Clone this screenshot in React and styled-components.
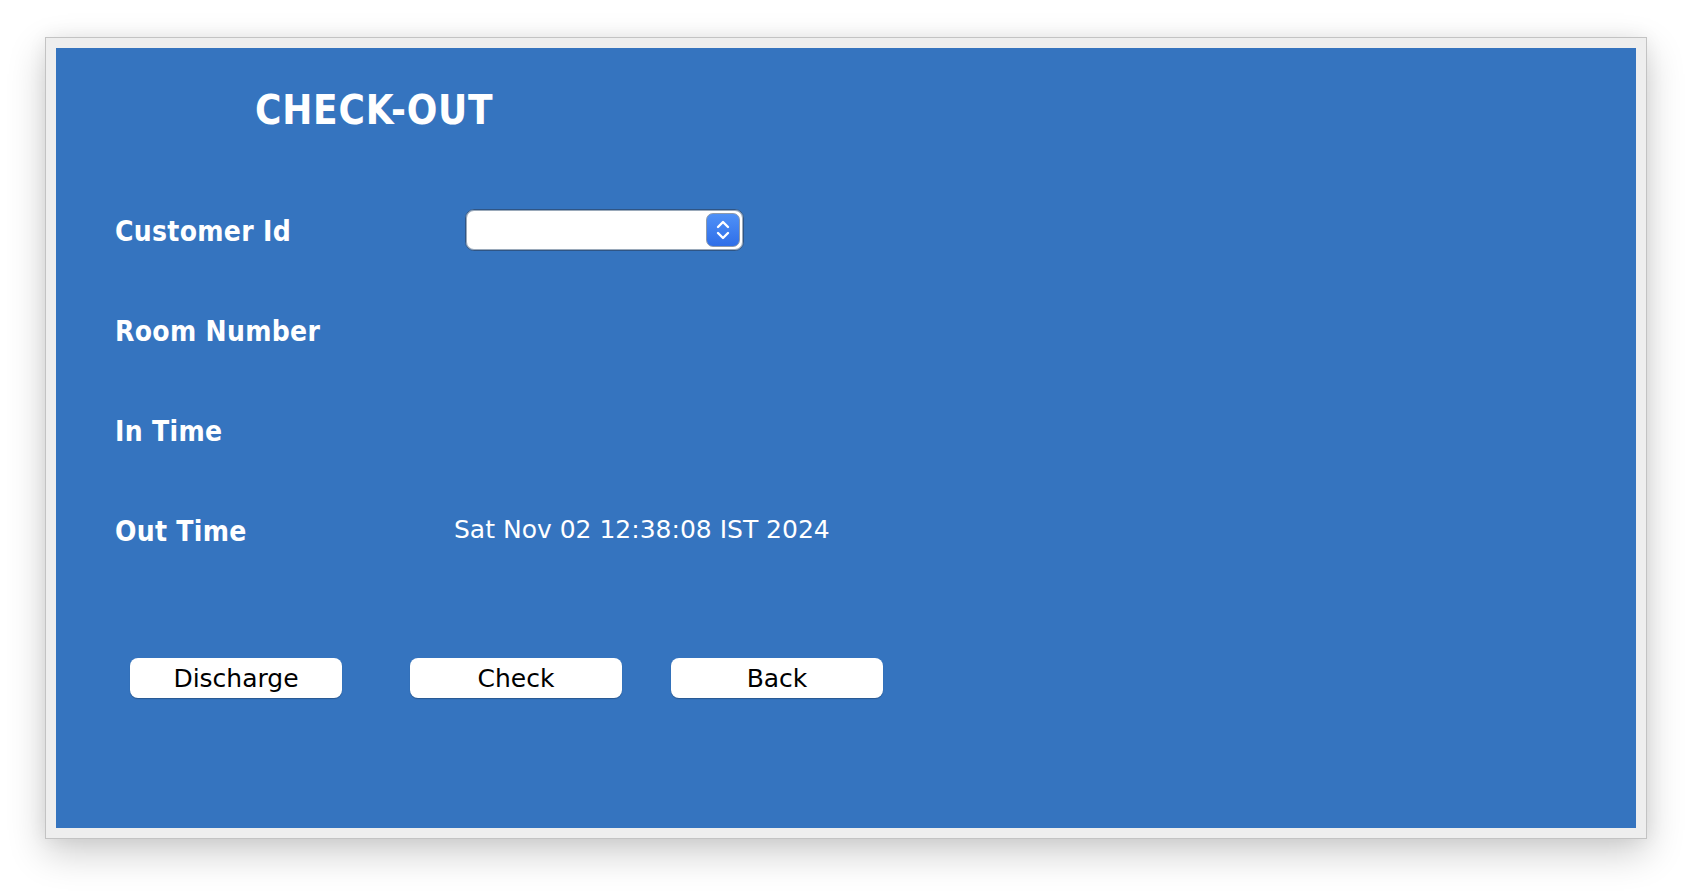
import React from "react";
import styled, { createGlobalStyle } from "styled-components";

const GlobalStyle = createGlobalStyle`
  html, body {
    margin: 0;
    padding: 0;
    background: #ffffff;
  }
  body {
    font-family: "DejaVu Sans", "Liberation Sans", sans-serif;
  }
`;

const Page = styled.div`
  padding: 37px 0 0 45px;
  width: 1692px;
  height: 892px;
  box-sizing: border-box;
`;

const Window = styled.div`
  width: 1602px;
  height: 802px;
  box-sizing: border-box;
  background: #eeeeee;
  border: 1px solid #c3c3c3;
  padding: 10px;
  box-shadow: 0 14px 36px rgba(0, 0, 0, 0.2), 0 0 18px rgba(0, 0, 0, 0.06);
`;

const Panel = styled.div`
  width: 1580px;
  height: 780px;
  background: #3574bf;
  display: flex;
  flex-direction: column;
  padding-top: 42px;
  box-sizing: border-box;
`;

const Title = styled.h1`
  margin: 0 0 0 199px;
  font-family: "DejaVu Sans Condensed", "DejaVu Sans", sans-serif;
  font-weight: bold;
  font-size: 40px;
  line-height: 40px;
  letter-spacing: 0.8px;
  color: #ffffff;
`;

const Form = styled.div`
  margin-top: 49px;
  display: grid;
  grid-template-columns: 339px 1fr;
  grid-auto-rows: 100px;
  align-items: center;
  padding-left: 59px;
`;

const Label = styled.div`
  font-family: "DejaVu Sans Condensed", "DejaVu Sans", sans-serif;
  font-weight: bold;
  font-size: 28px;
  line-height: 28px;
  letter-spacing: 0.3px;
  padding-top: 5px;
  color: #ffffff;
`;

const Value = styled.div`
  font-family: "DejaVu Sans", sans-serif;
  font-size: 25px;
  line-height: 25px;
  color: #ffffff;
`;

const Select = styled.div`
  margin-left: 11px;
  margin-top: 2px;
  width: 279px;
  height: 42px;
  box-sizing: border-box;
  border-radius: 9px;
  background: #ffffff;
  border: 1px solid #2f5585;
  box-shadow: inset 0 0 0 1px #9aa9ba;
  display: flex;
  align-items: center;
  justify-content: flex-end;
  padding-right: 3px;
`;

const Stepper = styled.div`
  width: 34px;
  height: 34px;
  box-sizing: border-box;
  border-radius: 7px;
  border: 1.5px solid #8d9aad;
  background: linear-gradient(#4f91f7, #2f6ee8);
  display: flex;
  align-items: center;
  justify-content: center;
`;

const ButtonRow = styled.div`
  margin-top: 79px;
  display: flex;
  padding-left: 74px;
`;

const Button = styled.button`
  width: 212px;
  height: 40px;
  margin-left: ${(p) => p.$offset || 0}px;
  border: none;
  border-radius: 8px;
  background: #ffffff;
  box-shadow: 0 1px 1px rgba(0, 0, 0, 0.25);
  font-family: "DejaVu Sans", sans-serif;
  font-size: 25px;
  line-height: 25px;
  color: #000000;
  padding: 0;
  cursor: pointer;
  display: flex;
  align-items: center;
  justify-content: center;
`;

const Chevrons = () => (
  <svg width="16" height="26" viewBox="0 0 16 26" fill="none">
    <path d="M3 10 L8 5 L13 10" stroke="#ffffff" strokeWidth="2.4" strokeLinecap="round" strokeLinejoin="round" />
    <path d="M3 16 L8 21 L13 16" stroke="#ffffff" strokeWidth="2.4" strokeLinecap="round" strokeLinejoin="round" />
  </svg>
);

export default function App() {
  return (
    <>
      <GlobalStyle />
      <Page>
        <Window>
          <Panel>
            <Title>CHECK-OUT</Title>
            <Form>
              <Label>Customer Id</Label>
              <div>
                <Select>
                  <Stepper>
                    <Chevrons />
                  </Stepper>
                </Select>
              </div>
              <Label>Room Number</Label>
              <div />
              <Label>In Time</Label>
              <div />
              <Label>Out Time</Label>
              <Value>Sat Nov 02 12:38:08 IST 2024</Value>
            </Form>
            <ButtonRow>
              <Button>Discharge</Button>
              <Button $offset={68}>Check</Button>
              <Button $offset={49}>Back</Button>
            </ButtonRow>
          </Panel>
        </Window>
      </Page>
    </>
  );
}
